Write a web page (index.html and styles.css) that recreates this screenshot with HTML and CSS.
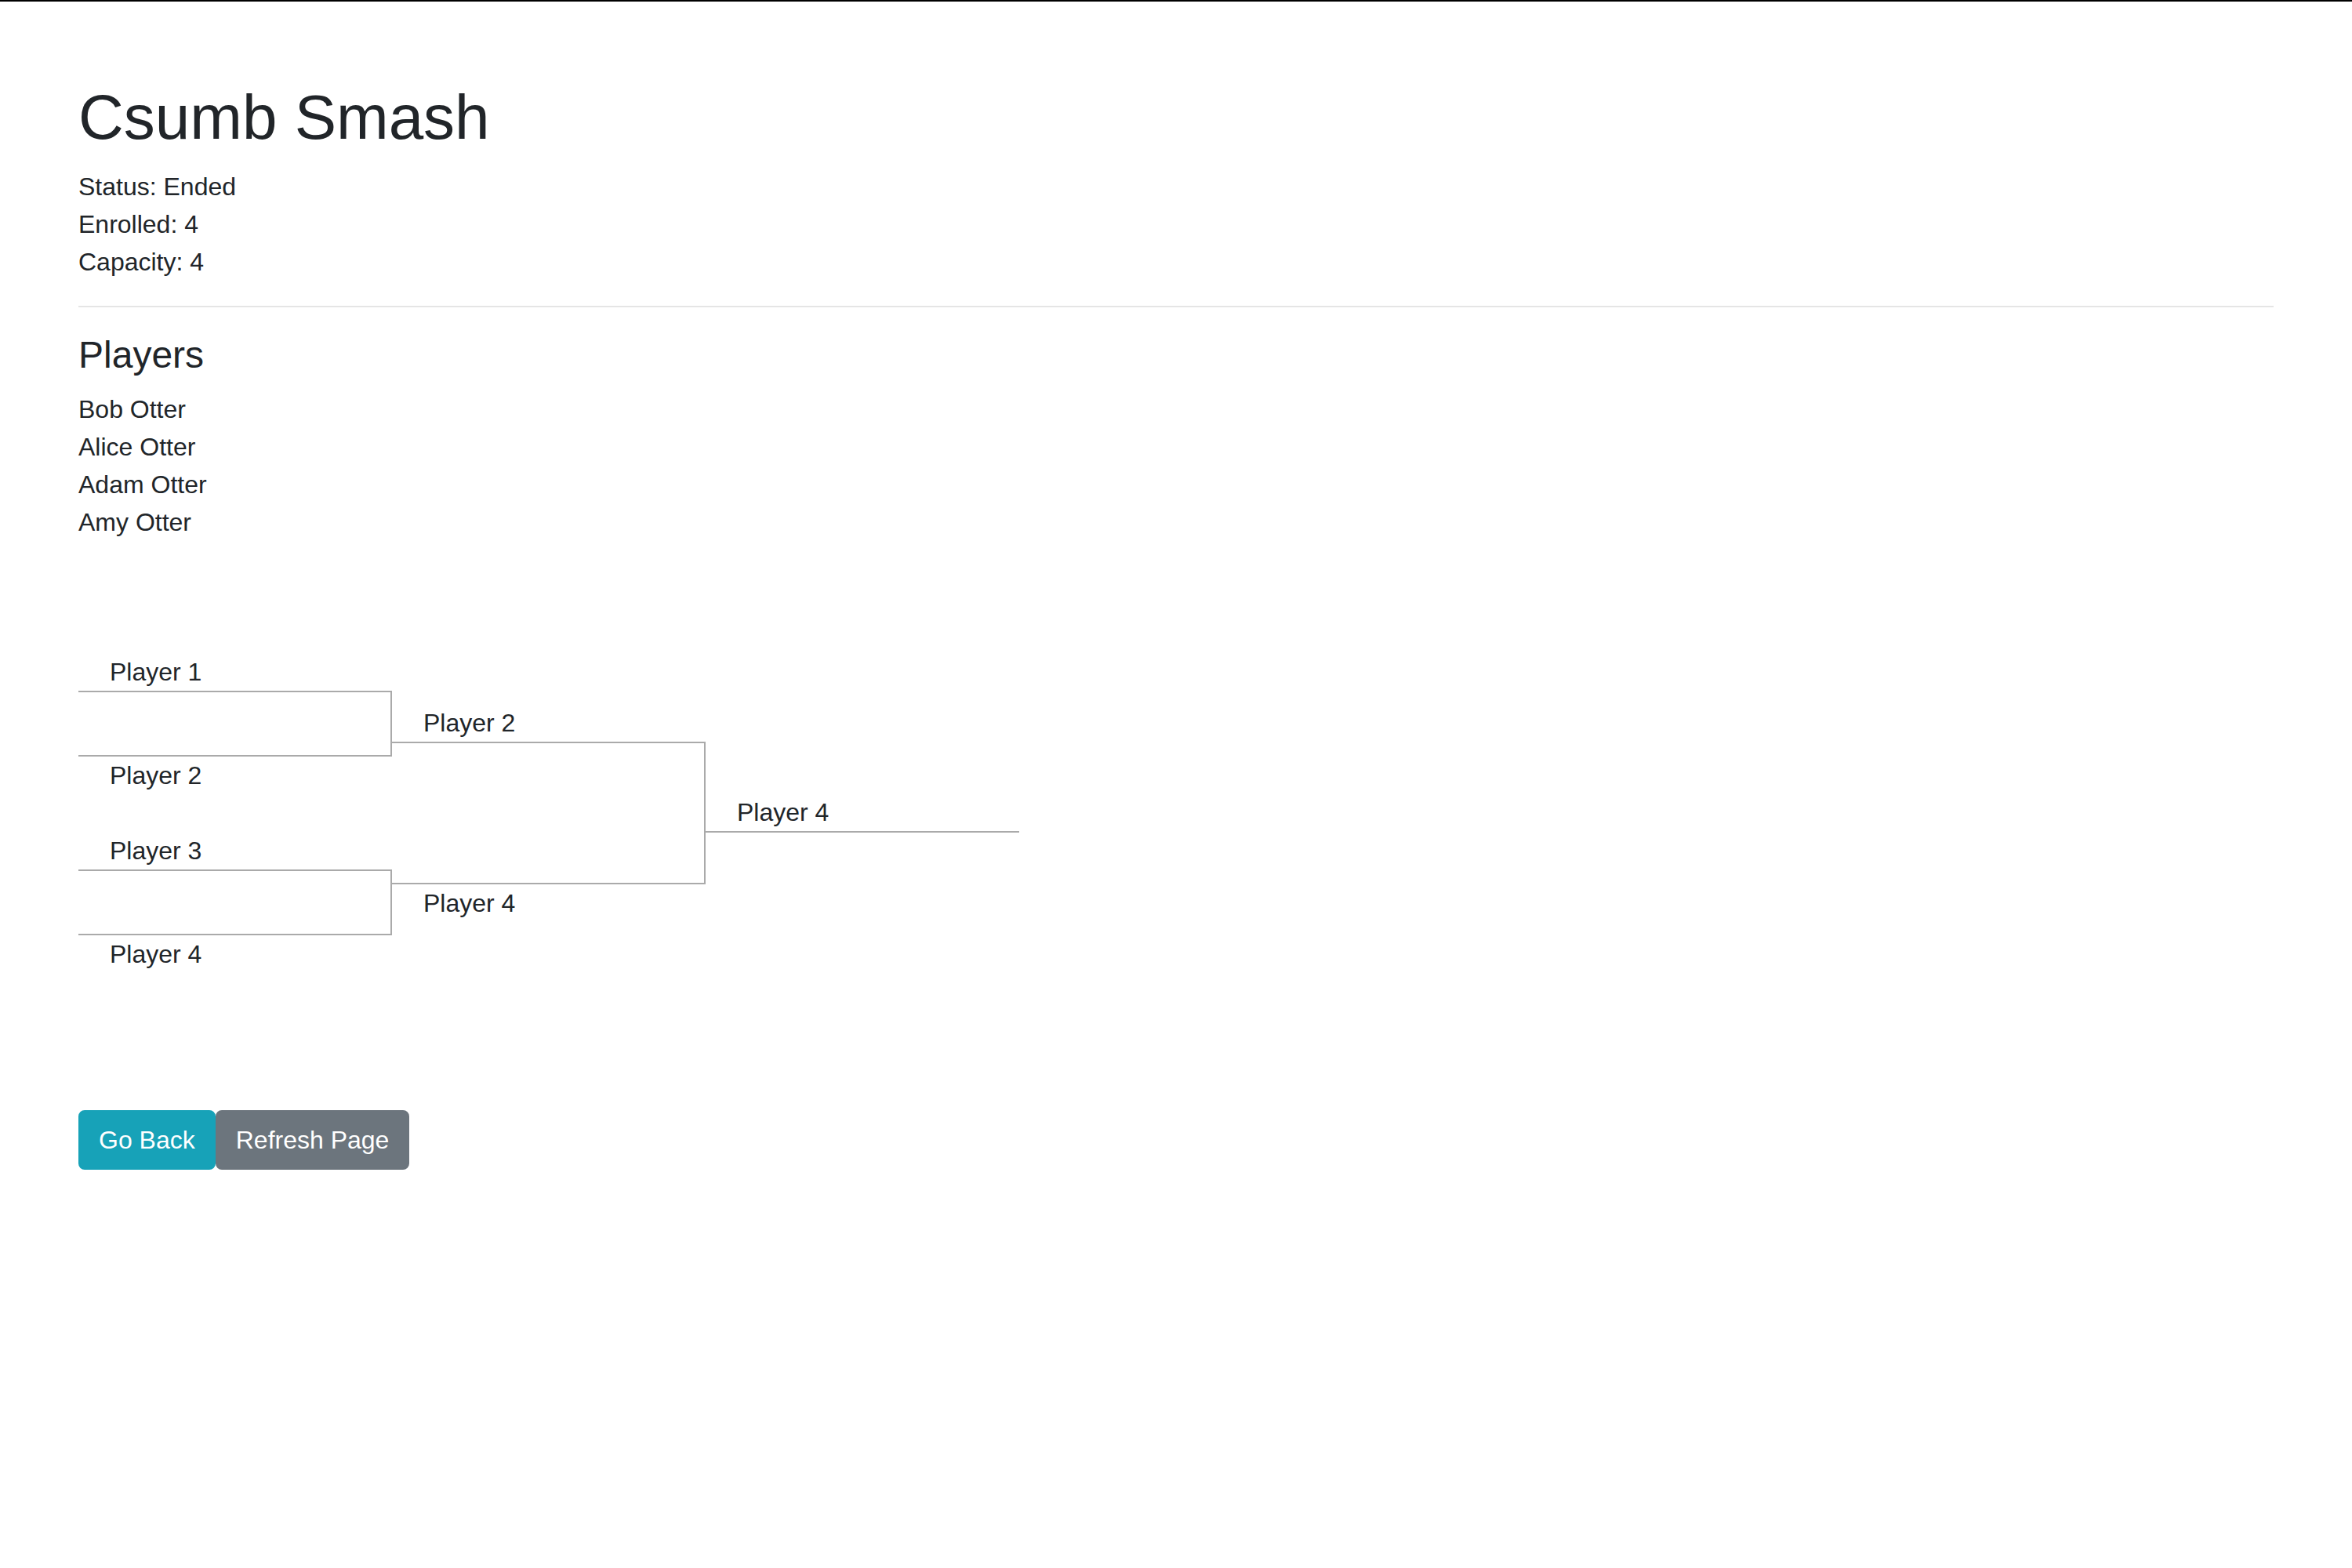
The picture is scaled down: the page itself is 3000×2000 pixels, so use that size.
FILE: index.html
```html
<!DOCTYPE html>
<html lang="en">
<head>
<meta charset="utf-8">
<title>Csumb Smash</title>
<link rel="stylesheet" href="styles.css">
</head>
<body>
<div class="page">
  <h1 class="title">Csumb Smash</h1>
  <div class="info">
    <div class="info-line">Status: Ended</div>
    <div class="info-line">Enrolled: 4</div>
    <div class="info-line">Capacity: 4</div>
  </div>
  <hr class="divider">
  <h4 class="section-title">Players</h4>
  <ul class="player-list">
    <li>Bob Otter</li>
    <li>Alice Otter</li>
    <li>Adam Otter</li>
    <li>Amy Otter</li>
  </ul>
  <main class="bracket">
    <ul class="round">
      <li class="spacer">&nbsp;</li>
      <li class="game game-top">Player 1</li>
      <li class="game game-spacer">&nbsp;</li>
      <li class="game game-bottom">Player 2</li>
      <li class="spacer">&nbsp;</li>
      <li class="game game-top">Player 3</li>
      <li class="game game-spacer">&nbsp;</li>
      <li class="game game-bottom">Player 4</li>
      <li class="spacer">&nbsp;</li>
    </ul>
    <ul class="round">
      <li class="spacer">&nbsp;</li>
      <li class="game game-top">Player 2</li>
      <li class="game game-spacer">&nbsp;</li>
      <li class="game game-bottom">Player 4</li>
      <li class="spacer">&nbsp;</li>
    </ul>
    <ul class="round">
      <li class="spacer">&nbsp;</li>
      <li class="game game-top">Player 4</li>
      <li class="spacer">&nbsp;</li>
    </ul>
  </main>
  <div class="actions"><button class="btn btn-info" type="button">Go Back</button><button class="btn btn-secondary" type="button">Refresh Page</button></div>
</div>
</body>
</html>
```
FILE: styles.css
```css
html, body {
  margin: 0;
  padding: 0;
  background: #fff;
}

body {
  border-top: 2px solid #000;
  font-family: "Liberation Sans", Arial, sans-serif;
  font-size: 32px;
  line-height: 1.5;
  color: #212529;
}

.page {
  padding: 100px 100px 200px;
}

.title {
  margin: 0 0 16px;
  font-size: 80px;
  font-weight: 400;
  line-height: 1.2;
}

.info-line {
  line-height: 48px;
}

.divider {
  margin: 32px 0;
  border: 0;
  border-top: 2px solid rgba(0, 0, 0, 0.1);
  height: 0;
}

.section-title {
  margin: 0 0 16px;
  font-size: 48px;
  font-weight: 400;
  line-height: 1.2;
}

.player-list {
  list-style: none;
  margin: 0;
  padding: 0;
}

.player-list li {
  line-height: 48px;
}

.bracket {
  display: flex;
  flex-direction: row;
  margin-top: 95px;
}

.round {
  display: flex;
  flex-direction: column;
  justify-content: center;
  width: 400px;
  list-style: none;
  margin: 0;
  padding: 0;
}

.round .spacer {
  flex-grow: 1;
}

.round .spacer:first-child,
.round .spacer:last-child {
  flex-grow: 0.5;
}

.round .game-spacer {
  flex-grow: 1;
}

.game {
  padding-left: 40px;
  line-height: 48px;
}

.game-top {
  border-bottom: 2px solid #aaa;
}

.game-spacer {
  border-right: 2px solid #aaa;
  min-height: 80px;
}

.game-bottom {
  border-top: 2px solid #aaa;
}

.actions {
  display: flex;
  margin-top: 127px;
}

.btn {
  font-family: "Liberation Sans", Arial, sans-serif;
  font-size: 32px;
  line-height: 48px;
  padding: 12px 24px;
  border-radius: 8px;
  border: 2px solid transparent;
  color: #fff;
  cursor: pointer;
  margin: 0;
}

.btn-info {
  background: #17a2b8;
  border-color: #17a2b8;
}

.btn-secondary {
  background: #6c757d;
  border-color: #6c757d;
}
```
